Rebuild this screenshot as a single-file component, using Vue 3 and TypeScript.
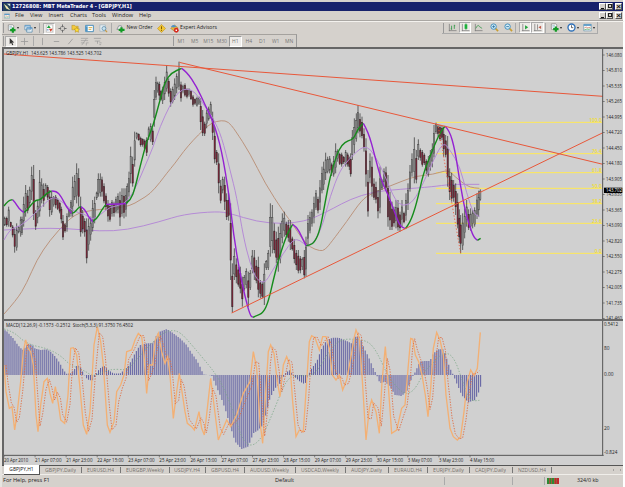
<script setup lang="ts">
interface Tool {
  icon: string
  w: number
  active?: boolean
  menu?: boolean
  text?: string
}
interface Candle {
  x: number
  high: number
  low: number
  top: number
  bottom: number
  bear: boolean
}
type Point = [number, number]

const menus = [
  { label: 'File', w: 15 },
  { label: 'View', w: 18.5 },
  { label: 'Insert', w: 21.5 },
  { label: 'Charts', w: 22 },
  { label: 'Tools', w: 20 },
  { label: 'Window', w: 27 },
  { label: 'Help', w: 14 },
]

const mainTools: Tool[] = [
  { icon: 'new', w: 16, menu: true },
  { icon: 'profiles', w: 17, menu: true },
  { icon: 'sep', w: 4 },
  { icon: 'market', w: 12, active: true },
  { icon: 'cross', w: 14 },
  { icon: 'folder', w: 13 },
  { icon: 'terminal', w: 14 },
  { icon: 'tester', w: 14 },
  { icon: 'sep', w: 3 },
  { icon: 'order', w: 41, text: 'New Order' },
  { icon: 'alert', w: 13 },
  { icon: 'expert', w: 51, text: 'Expert Advisors' },
]
const chartTools: Tool[] = [
  { icon: 'bars', w: 14 },
  { icon: 'candles', w: 12, active: true },
  { icon: 'line', w: 15 },
  { icon: 'zoomin', w: 16 },
  { icon: 'zoomout', w: 12 },
  { icon: 'sep', w: 4 },
  { icon: 'scroll', w: 12, active: true },
  { icon: 'shift', w: 13, active: true },
  { icon: 'sep', w: 3 },
  { icon: 'new', w: 16, menu: true },
  { icon: 'clock', w: 17, menu: true },
  { icon: 'template', w: 16, menu: true },
]
const drawTools: Tool[] = [
  { icon: 'cursor', w: 12, active: true },
  { icon: 'plus', w: 15 },
  { icon: 'sep', w: 2 },
  { icon: 'vline', w: 14 },
  { icon: 'hline', w: 14 },
  { icon: 'trend', w: 14 },
  { icon: 'fibo', w: 14 },
  { icon: 'label', w: 13 },
]
const periods = ['M1', 'M5', 'M15', 'M30', 'H1', 'H4', 'D1', 'W1', 'MN']

const tabs = [
  { label: 'GBPJPY,Daily', w: 41.5, t: 31 },
  { label: 'EURUSD,H4', w: 39, t: 27 },
  { label: 'EURGBP,Weekly', w: 49, t: 38 },
  { label: 'USDJPY,H4', w: 36, t: 26 },
  { label: 'GBPUSD,H4', w: 39, t: 28 },
  { label: 'AUDUSD,Weekly', w: 51, t: 39 },
  { label: 'USDCAD,Weekly', w: 50, t: 38 },
  { label: 'AUDJPY,Daily', w: 43, t: 31 },
  { label: 'EURAUD,H4', w: 39, t: 28 },
  { label: 'EURJPY,Daily', w: 42, t: 31 },
  { label: 'CADJPY,Daily', w: 43, t: 31 },
  { label: 'NZDUSD,H4', w: 39, t: 28 },
]

// chart space: three units per screen pixel, y grows downwards
const priceLabels = [
  '146.080', '145.810', '145.535', '145.265', '144.995', '144.720', '144.450', '144.180', '143.905',
  '143.635', '143.365', '143.090', '142.820', '142.550', '142.275', '142.005', '141.735', '141.460',
].map((text, i) => ({ text, y: 15 + i * 46.5 }))

const fibo = [
  { text: '100.0', y: 217 },
  { text: '76.4', y: 311 },
  { text: '61.8', y: 368 },
  { text: '50.0', y: 415 },
  { text: '38.2', y: 461 },
  { text: '23.6', y: 520 },
  { text: '0.0', y: 610 },
]

const timeLabels = [
  '20 Apr 2010', '21 Apr 07:00', '21 Apr 23:00', '22 Apr 15:00', '23 Apr 07:00', '25 Apr 23:00', '26 Apr 15:00', '27 Apr 07:00',
  '27 Apr 23:00', '28 Apr 15:00', '29 Apr 07:00', '29 Apr 23:00', '30 Apr 15:00', '3 May 07:00', '3 May 23:00', '4 May 15:00',
].map((text, i) => ({ text, x: 11 + i * 93.2 }))

// x, high, low
const ranges = `14 500 528,20 500 530,26 470 530,32 515 532,38 525 562,44 535 608,50 520 602,56 528 550,62 500 560,66 500 555,71 440 530,77 405 500,83 420 490,89 410 470,95 350 450,101 345 510,
107 480 540,113 450 520,119 360 500,125 385 460,131 400 470,137 400 440,143 405 450,149 420 500,155 425 495,161 438 470,167 435 475,173 445 480,179 455 490,184 470 520,189 495 570,195 520 548,
201 490 545,207 475 502,213 450 500,218 380 500,224 375 450,230 340 460,236 355 470,242 440 560,248 480 550,254 505 560,260 505 640,266 505 602,272 500 572,278 450 545,284 440 520,290 425 450,
295 370 440,301 370 440,306 380 440,312 400 460,318 430 480,324 450 515,330 460 515,336 450 500,342 455 500,348 440 490,354 430 490,360 425 528,366 415 500,372 415 505,378 415 500,382 400 460,
387 365 440,392 290 400,398 320 410,404 245 350,410 247 268,416 250 272,422 260 290,428 265 290,434 268 300,440 262 318,446 230 270,452 220 275,458 235 285,463 120 230,468 80 150,473 95 128,
478 95 150,483 120 152,488 110 162,494 80 150,500 45 125,506 85 140,512 115 170,518 110 160,524 85 150,530 70 130,537 35 120,543 95 155,549 104 130,555 100 140,561 115 145,567 115 140,573 120 150,
579 135 170,585 145 165,591 140 170,597 140 165,602 145 240,608 180 258,614 215 258,620 180 235,626 170 212,632 155 205,638 185 270,644 230 340,650 300 345,656 310 430,662 390 460,668 380 430,
674 380 480,680 430 510,686 430 512,692 460 690,697 640 788,703 595 690,709 625 700,715 650 710,721 650 730,727 680 770,733 675 722,739 655 715,745 665 770,751 660 720,757 600 670,763 600 690,769 630 700,
775 620 742,781 690 745,787 695 745,793 640 765,799 630 660,805 600 660,811 460 620,817 465 610,823 520 610,829 545 640,835 530 665,841 520 640,847 490 580,853 485 560,859 515 560,865 510 575,
871 510 600,877 560 602,883 568 640,889 600 660,895 600 670,901 618 670,907 622 660,913 600 685,918 560 680,924 495 590,930 485 550,936 478 530,942 440 520,948 420 480,954 440 490,960 390 480,
966 350 430,971 335 420,977 308 390,983 320 370,989 318 370,995 338 378,1001 318 380,1007 280 370,1013 298 335,1019 308 345,1025 308 350,1031 318 342,1037 300 350,1043 308 350,1048 320 360,1052 310 380,
1057 240 330,1063 205 310,1069 190 275,1074 165 250,1080 190 262,1086 200 265,1092 235 305,1098 265 410,1104 360 500,1110 310 400,1116 320 440,1122 385 450,1128 395 460,1134 420 505,1140 350 490,1146 388 420,
1152 355 410,1158 350 420,1164 375 530,1170 425 540,1176 455 540,1182 470 530,1188 450 535,1194 450 542,1200 485 545,1206 450 530,1212 485 520,1218 430 512,1224 400 480,1230 345 425,1236 310 380,1243 262 400,
1249 300 400,1255 268 330,1261 295 332,1267 300 350,1273 310 345,1279 328 372,1285 318 380,1291 300 362,1297 280 352,1302 225 322,1308 218 252,1314 225 260,1320 225 272,1326 228 270,1331 230 320,1337 255 322,
1343 258 410,1349 355 450,1355 368 455,1361 390 455,1367 400 495,1373 430 535,1378 478 580,1382 495 610,1388 490 600,1394 475 565,1400 450 530,1406 478 540,1412 475 542,1418 480 535,1424 472 530,1431 430 507,1436 422 500,1441 418 452`

const candles: Candle[] = ranges.split(',').map((row, i, rows) => {
  const [x, high, low] = row.trim().split(' ').map(Number)
  const prev = (rows[i - 1] ?? row).trim().split(' ').map(Number)
  const bear = high + low > prev[1] + prev[2]
  const span = low - high
  const lead = span > 60 ? 0.26 : 0.16
  return { x, high, low, top: high + span * lead, bottom: low - span * (0.12 + (i % 3) * 0.07), bear }
})

const points = (text: string): Point[] =>
  text.trim().split(/\s+/).map(p => p.split(',').map(Number) as Point)

// quadratic smoothing through segment midpoints
const smooth = (text: string): string => {
  const pts = points(text)
  let d = `M${pts[0]}`
  for (let i = 1; i < pts.length - 1; i++) {
    const [x, y] = pts[i]
    const [nx, ny] = pts[i + 1]
    d += ` Q${x},${y} ${(x + nx) / 2},${(y + ny) / 2}`
  }
  return `${d} L${pts[pts.length - 1]}`
}

const fastUp = [
  '12,468 25,452 38,449', '72,487 80,482 95,462 108,450 120,450 140,430 155,423', '215,490 222,490 235,473 243,470',
  '278,515 290,508 305,480 318,463', '378,461 392,450 405,415 420,350 440,275 460,225 480,150 495,95 515,68 545,55',
  '758,802 768,798 790,788 805,755 820,690 835,630 860,555 878,523',
  '918,587 930,586 945,575 960,540 975,460 990,380 1010,315 1025,285 1045,271 1060,268 1075,235 1090,220',
  '1216,536 1230,520 1250,460 1270,370 1290,320 1310,270 1325,240 1335,229', '1432,571 1442,565',
].map(smooth)
const fastDown = [
  '38,449 45,456 58,478 72,487', '155,423 170,423 185,442 200,472 215,490', '243,470 255,478 265,500 278,515',
  '318,463 335,463 378,461',
  '545,55 560,65 590,110 615,165 640,215 665,300 688,440 700,550 720,670 735,740 750,795 758,802',
  '878,523 890,530 905,560 918,587',
  '1090,220 1105,245 1125,320 1145,395 1165,435 1185,490 1200,528 1216,536',
  '1335,229 1348,240 1365,300 1380,400 1395,480 1408,525 1420,560 1432,571',
].map(smooth)

const midMa = smooth(`12,570 30,535 60,530 100,495 140,455 160,440 180,450 220,485 250,490 280,510 300,495 330,470 370,465 400,430 430,360 460,290 480,230
510,165 535,125 560,115 585,125 615,170 640,205 665,260 690,360 710,440 730,560 750,640 770,690 795,700 815,665 850,610 880,568 900,570 920,590
945,575 970,520 990,440 1020,360 1050,325 1070,305 1090,290 1110,295 1135,335 1160,390 1185,450 1210,470 1240,455 1270,400 1300,330 1330,275 1350,300 1380,350 1400,430 1420,490 1438,500`)
const tanMa = smooth(`12,792 50,750 80,700 110,630 150,570 200,515 225,495 250,485 300,478 340,475 390,468 420,450 450,432 480,397
500,370 525,340 550,305 580,270 610,240 635,218 665,211 685,215 705,240 750,310 795,400 850,485 880,525 905,565 930,592 960,603 975,600
995,575 1040,515 1085,450 1115,430 1160,412 1210,392 1250,378 1300,373 1335,362 1350,365 1365,380 1390,400 1410,412 1438,415`)
const slowMa = smooth(`12,540 100,535 200,535 300,544 380,540 480,515 550,493 650,484 690,490 770,515 850,522 915,513 950,500 1000,475 1050,448 1120,425 1200,418 1300,410 1350,403 1438,403`)

const histAnchors = points(`14,45 20,48 30,60 40,70 50,85 60,98 70,105 80,90 95,88 105,100 120,105 140,103 150,108 160,118 170,130 180,145 190,165 200,176 212,175 222,165 232,150 240,155 248,170 258,188
268,196 278,196 284,185 292,170 300,160 312,152 325,165 340,175 360,176 372,165 384,155 392,140 405,115 420,90 440,85 460,85 470,60 480,50 500,42 520,55 540,70 560,90 575,115 590,135 600,155 610,178
635,181 645,205 660,240 675,280 690,330 705,380 725,402 745,395 760,355 775,345 790,330 800,290 810,250 825,220 845,200 855,175 870,165 880,182 900,200 915,208 925,180 935,160 950,140 965,100 980,75
1000,68 1015,68 1040,78 1055,85 1065,65 1080,65 1090,95 1105,125 1120,160 1130,180 1140,205 1155,200 1170,215 1185,240 1205,243 1220,230 1235,190 1245,172 1260,140 1275,138 1290,138 1300,115 1315,103
1330,103 1340,130 1350,160 1360,180 1370,205 1385,240 1405,262 1425,255 1435,235 1442,215`)

const bars: Point[] = []
for (let x = 15; x <= 1442; x += 5.97) {
  const i = histAnchors.findIndex(p => p[0] >= x)
  const [x1, y1] = histAnchors[i]
  const [x0, y0] = histAnchors[Math.max(i - 1, 0)]
  bars.push([x, x1 === x0 ? y1 : y0 + ((y1 - y0) * (x - x0)) / (x1 - x0)])
}

const stochPts = points(`12,150 18,230 28,280 36,275 44,345 52,290 62,200 70,110 77,75 84,100 92,110 100,150 108,300 114,350 122,270 132,200 142,190 150,235 158,265 166,215 175,265 182,315 194,325 204,240 212,100
220,98 230,120 240,220 250,330 260,358 270,290 282,90 292,35 302,80 310,150 322,330 330,352 342,320 350,230 362,210 372,180 380,110 395,105 405,75 415,55 425,65 432,120 440,235 448,150 458,150 466,75
475,55 485,110 495,145 503,125 510,180 520,310 530,230 538,175 546,230 555,290 562,325 575,335 583,345 597,290 605,340 613,360 622,280 632,190 642,270 655,375 665,350 680,315 692,335 710,300 730,235
750,200 760,110 770,160 780,320 788,385 798,220 805,110 812,90 822,115 832,200 840,245 850,150 860,125 870,150 878,260 888,365 898,345 910,350 920,200 928,80 935,62 945,68 958,105 968,65 978,65 988,100
997,180 1008,195 1018,180 1028,225 1040,195 1052,130 1062,70 1068,45 1078,70 1086,180 1098,375 1108,280 1115,255 1128,290 1138,355 1146,200 1156,95 1164,200 1175,355 1190,345 1205,280 1215,270 1225,150
1232,70 1238,72 1246,120 1256,140 1266,180 1276,240 1284,305 1292,220 1300,100 1310,52 1320,75 1330,120 1338,240 1350,340 1360,365 1372,375 1382,365 1392,290 1402,200 1412,165 1422,182 1432,160 1441,52`)
const stoch = stochPts.join(' ')
const stochSignal = stochPts
  .map(([x, y], i) => [x + 6, (y * 2 + stochPts[Math.max(i - 1, 0)][1]) / 3])
  .filter(([x]) => x < 1440)
  .join(' ')
const macdSignal = smooth(`12,42 40,50 70,78 100,92 140,100 180,120 210,150 250,165 280,185 310,170 340,162 380,165 400,145 440,100 480,60 510,45 540,50 580,95 630,155 645,175 670,215 700,290 720,355 740,390
765,390 790,360 820,290 850,215 870,185 900,182 930,182 950,170 975,130 1000,90 1030,72 1070,73 1100,78 1120,95 1140,130 1160,175 1180,205 1210,235 1230,235 1250,215 1275,165 1300,145 1320,120 1345,113
1365,135 1385,190 1405,250 1420,258 1438,256`)
</script>

<template>
  <div class="terminal">
    <svg class="sprite">
      <symbol id="new" viewBox="0 0 10 10">
        <path d="M1.5 1h5l1 1v5h-6z" fill="#fff" stroke="#777" stroke-width=".7" />
        <path d="M2.5 3h3M2.5 4.5h3" stroke="#59a" stroke-width=".6" />
        <path d="M6.5 3.8v6M3.5 6.8h6" stroke="#129a25" stroke-width="2.4" />
      </symbol>
      <symbol id="profiles" viewBox="0 0 10 10">
        <path d="M1 1.5h6v5h-6zM3 4h6v5h-6z" fill="#f6fafc" stroke="#4e86ad" stroke-width=".8" />
        <path d="M3 4.8h6M1 2.2h6" stroke="#5b9bd0" stroke-width="1.2" />
      </symbol>
      <symbol id="market" viewBox="0 0 10 10">
        <path d="M1.500 1h7v8h-7z" fill="#fff" stroke="#9a9a9a" stroke-width=".5" />
        <path d="M2 4.500l2.200-3 2.200 3z" fill="#1ba03a" />
        <path d="M4.200 5.200h4.400l-2.200 3.300z" fill="#d4452e" />
        <path d="M2 6.500h2" stroke="#3a73b8" />
      </symbol>
      <symbol id="cross" viewBox="0 0 10 10">
        <circle cx="5" cy="5" r="2.500" fill="none" stroke="#777" stroke-width=".8" />
        <path d="M5 .5v3M5 6.500v3M.5 5h3M6.500 5h3" stroke="#666" />
      </symbol>
      <symbol id="folder" viewBox="0 0 10 10">
        <path d="M1 1.500h3l1 1h3v4h-7z" fill="#f3c93c" stroke="#a88622" stroke-width=".5" />
        <path d="M6.500 3.500l1 2 2 .2-1.500 1.500.4 2-1.900-1-1.900 1 .4-2-1.500-1.500 2-.2z" fill="#ffdf35" stroke="#a77f15" stroke-width=".5" />
      </symbol>
      <symbol id="terminal" viewBox="0 0 10 10">
        <path d="M.7 1.500h8.600v7h-8.600z" fill="#fff" stroke="#3e87b5" />
        <path d="M1 2.500h2v5.500h-2z" fill="#4b97ca" />
        <path d="M4 4h4M4 6h3" stroke="#d5aa40" />
      </symbol>
      <symbol id="tester" viewBox="0 0 10 10">
        <path d="M1 1h6v7h-6z" fill="#e5edf2" stroke="#8ba3b5" stroke-width=".6" />
        <circle cx="5.500" cy="5" r="2.200" fill="#c8e2ef" stroke="#5485a5" stroke-width=".8" />
        <path d="M7 6.800l2 2.200" stroke="#c6983f" stroke-width="1.300" />
      </symbol>
      <symbol id="order" viewBox="0 0 10 10">
        <path d="M1 6l2-4h3l1 4z" fill="#eee" stroke="#68727c" stroke-width=".7" />
        <path d="M6 3.500v6M3 6.500h6.500" stroke="#129a25" stroke-width="2.400" />
      </symbol>
      <symbol id="alert" viewBox="0 0 10 10">
        <path d="M5 .5l4.500 4.500-4.500 4.500-4.500-4.500z" fill="#f3c735" stroke="#b88b18" stroke-width=".6" />
        <path d="M5 2.500v3.200M5 6.500v1.200" stroke="#765400" />
      </symbol>
      <symbol id="expert" viewBox="0 0 10 10">
        <path d="M.7 5l4-4 4 3-3.500 4z" fill="#e6b440" stroke="#8f7227" stroke-width=".5" />
        <path d="M1 3c2-3 5-2 6 0l-3 1z" fill="#4f92c5" />
        <circle cx="7" cy="7" r="2.700" fill="#d62b20" />
        <path d="M6.200 6.200h1.600v1.600h-1.600z" fill="#fff" />
      </symbol>
      <symbol id="bars" viewBox="0 0 10 10">
        <path d="M1.500 1v8M1 8.500h8.500" stroke="#777" stroke-width=".8" />
        <path d="M4 3v4.500M3 6.500h1M7 2v4.500M7 3h1" stroke="#2b9440" stroke-width=".9" />
      </symbol>
      <symbol id="candles" viewBox="0 0 10 10">
        <path d="M1.500 1v8M1 8.500h8.500" stroke="#777" stroke-width=".8" />
        <path d="M5.500.5v7" stroke="#16852b" stroke-width=".8" />
        <path d="M4 1.500h3v5h-3z" fill="#1bb13b" />
      </symbol>
      <symbol id="line" viewBox="0 0 10 10">
        <path d="M1.500 1v8M1 8.500h8.500" stroke="#777" stroke-width=".8" />
        <path d="M2 6c2-4 3-4 4-2l3 2" fill="none" stroke="#2b9440" stroke-width=".8" />
      </symbol>
      <symbol id="zoomin" viewBox="0 0 10 10">
        <path d="M6 6l3 3" stroke="#c99d32" stroke-width="1.800" />
        <circle cx="4" cy="4" r="3" fill="#d2ecf6" stroke="#3a8abb" />
        <path d="M4 2.500v3M2.500 4h3" stroke="#2671a2" stroke-width=".9" />
      </symbol>
      <symbol id="zoomout" viewBox="0 0 10 10">
        <path d="M6 6l3 3" stroke="#c99d32" stroke-width="1.800" />
        <circle cx="4" cy="4" r="3" fill="#d2ecf6" stroke="#3a8abb" />
        <path d="M2.500 4h3" stroke="#2671a2" stroke-width=".9" />
      </symbol>
      <symbol id="scroll" viewBox="0 0 10 10">
        <path d="M2 1v8M1 8.500h8.500" stroke="#777" stroke-width=".8" />
        <path d="M4.500 2.500l3.500 2.300-3.500 2.300z" fill="#24a23d" />
      </symbol>
      <symbol id="shift" viewBox="0 0 10 10">
        <path d="M2 1v8M1 8.500h8.500M5 1.500v6" stroke="#777" stroke-width=".8" />
        <path d="M9 3l-3 1.800 3 1.800z" fill="#c25a48" />
      </symbol>
      <symbol id="clock" viewBox="0 0 10 10">
        <circle cx="5" cy="5" r="3.900" fill="#fff" stroke="#2e70b8" stroke-width="1.500" />
        <path d="M5 2.500v2.700h2" fill="none" stroke="#333" stroke-width=".8" />
      </symbol>
      <symbol id="template" viewBox="0 0 10 10">
        <path d="M.8 1.500h8.400v7.200h-8.400z" fill="#fff" stroke="#5f8fae" stroke-width=".7" />
        <path d="M.8 2.300h8.400" stroke="#4c92c4" stroke-width="1.700" />
        <path d="M1.500 5.500l2-1 2 1 3-1" fill="none" stroke="#bd5b42" stroke-width=".7" />
        <path d="M1.500 7.500l3-.8 2 .5 2-1" fill="none" stroke="#28963d" stroke-width=".7" />
      </symbol>
      <symbol id="cursor" viewBox="0 0 10 10">
        <path d="M3 1v7l1.600-1.500 1.200 2.800 1.200-.6-1.200-2.600h2.200z" fill="#333" />
      </symbol>
      <symbol id="plus" viewBox="0 0 10 10"><path d="M5 1v8M1 5h8" stroke="#999" stroke-width=".9" /></symbol>
      <symbol id="vline" viewBox="0 0 10 10"><path d="M5 1v8" stroke="#999" stroke-width=".9" /></symbol>
      <symbol id="hline" viewBox="0 0 10 10"><path d="M2 5h6" stroke="#999" stroke-width=".9" /></symbol>
      <symbol id="trend" viewBox="0 0 10 10"><path d="M2.500 8l5-6" stroke="#999" stroke-width=".9" /></symbol>
      <symbol id="fibo" viewBox="0 0 10 10">
        <path d="M1 1.500h8M1 4h8M1 6.500h4M2 9l5-7M7 6.500h2.500M7 6.500v3" fill="none" stroke="#999" stroke-width=".7" />
      </symbol>
      <symbol id="label" viewBox="0 0 10 10">
        <path d="M1 1.500h8M2 4.500h6M5 4.500v3M7 6.500h2.500M7 8.500h2" fill="none" stroke="#999" stroke-width=".8" />
      </symbol>
    </svg>

    <header class="title">
      <svg class="title__logo" viewBox="0 0 10 10">
        <path d="M0 0h10v10h-10z" fill="#25435c" />
        <path d="M1 1l4 3 4 5-5-2z" fill="#f5e8b0" />
        <path d="M5 1h4v3z" fill="#d9e5ec" />
      </svg>
      <span class="title__text">12726808: MBT MetaTrader 4 - [GBPJPY,H1]</span>
      <span class="winbtns"><i class="min" /><i class="restore" /><i class="close">×</i></span>
    </header>

    <nav class="menu">
      <svg class="menu__icon"><use href="#template" /></svg>
      <span v-for="m in menus" :key="m.label" class="menu__item" :style="{ width: m.w + 'px' }">{{ m.label }}</span>
      <span class="winbtns"><i class="min" /><i class="restore" /><i class="close">×</i></span>
    </nav>

    <div class="toolbar">
      <i class="grip" />
      <span
        v-for="(t, i) in mainTools"
        :key="i"
        class="tool"
        :class="{ 'tool--active': t.active, 'tool--sep': t.icon === 'sep' }"
        :style="{ width: t.w + 'px' }"
      >
        <svg v-if="t.icon !== 'sep'"><use :href="'#' + t.icon" /></svg>
        <span v-if="t.text" class="tool__text">{{ t.text }}</span>
        <i v-if="t.menu" class="arrow" />
      </span>
      <div class="toolbar__right">
        <i class="grip" />
        <span
          v-for="(t, i) in chartTools"
          :key="i"
          class="tool"
          :class="{ 'tool--active': t.active, 'tool--sep': t.icon === 'sep' }"
          :style="{ width: t.w + 'px' }"
        >
          <svg v-if="t.icon !== 'sep'"><use :href="'#' + t.icon" /></svg>
          <i v-if="t.menu" class="arrow" />
        </span>
      </div>
    </div>

    <div class="toolbar toolbar--draw">
      <i class="grip" />
      <span
        v-for="(t, i) in drawTools"
        :key="i"
        class="tool"
        :class="{ 'tool--active': t.active, 'tool--sep': t.icon === 'sep' }"
        :style="{ width: t.w + 'px' }"
      >
        <svg v-if="t.icon !== 'sep'"><use :href="'#' + t.icon" /></svg>
      </span>
      <div class="periods">
        <i class="grip" />
        <span v-for="p in periods" :key="p" class="period" :class="{ 'period--active': p === 'H1' }">{{ p }}</span>
      </div>
    </div>

    <main class="charts">
      <svg class="price" viewBox="12 -3 1857 810">
        <g class="fibo">
          <g v-for="f in fibo" :key="f.text">
            <path :d="`M1308 ${f.y}H1806`" />
            <text x="1805" :y="f.y - 2" text-anchor="end">{{ f.text }}</text>
          </g>
        </g>
        <path class="ma ma--tan" :d="tanMa" />
        <path class="ma ma--slow" :d="slowMa" />
        <g v-for="c in candles" :key="c.x">
          <path class="wick" :d="`M${c.x} ${c.high}V${c.low}`" />
          <rect :class="c.bear ? 'bear' : 'bull'" :x="c.x - 1.8" :y="c.top" width="3.6" :height="c.bottom - c.top" />
        </g>
        <path class="ma ma--slow" :d="midMa" />
        <path v-for="d in fastUp" :key="d" class="fast fast--up" :d="d" />
        <path v-for="d in fastDown" :key="d" class="fast fast--down" :d="d" />
        <path class="trend" d="M12 12L1809 139M538 37L1809 343M695 789L1809 248" />
        <path class="trend trend--dots" d="M1315 230L1382 610" />
        <text class="info" x="18" y="14" textLength="287" lengthAdjust="spacingAndGlyphs">GBPJPY,H1&#160; 143.625 143.786 143.525 143.702</text>
        <path class="axis" d="M1808 -3V807" />
        <g v-for="p in priceLabels" :key="p.text">
          <path class="tick" :d="`M1808 ${p.y}h6`" />
          <text class="axis-text" x="1818" :y="p.y + 5" textLength="48" lengthAdjust="spacingAndGlyphs">{{ p.text }}</text>
        </g>
        <rect x="1812" y="413" width="55" height="16" />
        <text class="axis-text axis-text--now" x="1818" y="426" textLength="48" lengthAdjust="spacingAndGlyphs">143.702</text>
      </svg>

      <svg class="indicator" viewBox="12 18 1857 432">
        <path v-for="b in bars" :key="b[0]" class="hist" :d="`M${b[0]} 180V${b[1]}`" />
        <path class="macd" :d="macdSignal" />
        <polyline class="stoch" :points="stoch" />
        <polyline class="stoch-signal" :points="stochSignal" />
        <text class="info" x="18" y="37" textLength="381" lengthAdjust="spacingAndGlyphs">MACD(12,26,9) -0.1573 -0.2512&#160; Stoch(5,3,3) 91.3750 76.4502</text>
        <path class="axis" d="M1808 18V421M12 421H1811" />
        <text class="axis-text" x="1812" y="33" textLength="42" lengthAdjust="spacingAndGlyphs">0.5412</text>
        <text class="axis-text" x="1812" y="104">80</text>
        <text class="axis-text" x="1812" y="183">0.00</text>
        <text class="axis-text" x="1812" y="344">20</text>
        <text class="axis-text" x="1812" y="417" textLength="40" lengthAdjust="spacingAndGlyphs">-0.824</text>
        <g v-for="t in timeLabels" :key="t.text">
          <path class="tick" :d="`M${t.x + 1} 421v6`" />
          <text class="axis-text" :x="t.x + 1" y="440" :textLength="t.text.length * 6.6" lengthAdjust="spacingAndGlyphs">{{ t.text }}</text>
        </g>
      </svg>
    </main>

    <div class="tabs">
      <span class="tab tab--active">GBPJPY,H1</span>
      <span v-for="t in tabs" :key="t.label" class="tab" :style="{ width: t.w + 'px' }">
        <svg class="tab__label" :style="{ width: t.t + 'px' }"><text x="0" y="6" :textLength="t.t" lengthAdjust="spacingAndGlyphs">{{ t.label }}</text></svg>
      </span>
      <span class="tabs__nav"><i class="nav-left" /><i class="nav-right" /></span>
    </div>

    <footer class="status">
      <span class="status__help">For Help, press F1</span>
      <span class="status__profile">Default</span>
      <span class="status__cell" />
      <span class="status__cell status__cell--wide" />
      <span class="status__cell status__cell--net">
        <i class="signal"><b /><b /><b /><b /><b /></i>
        <span>324/0 kb</span>
      </span>
    </footer>
  </div>
</template>

<style>
body {
  margin: 0;
  background: #fff;
}
</style>

<style scoped>
.terminal {
  box-sizing: border-box;
  width: 625px;
  height: 487px;
  padding: 2px 2px 0 2px;
  display: flex;
  flex-direction: column;
  overflow: hidden;
  background: linear-gradient(90deg, #e6e4e0 2px, #d5d1cc 2px 623px, #fff 623px);
  font-family: "Open Sans", "Noto Sans", sans-serif;
  font-size: 5.6px;
  line-height: 1;
  color: #222;
}

.sprite {
  position: absolute;
  width: 0;
  height: 0;
}

.title {
  height: 9px;
  flex: none;
  display: flex;
  align-items: center;
  background: #17216b;
  color: #fff;
}

.title__logo {
  width: 8px;
  height: 8px;
  margin: 0 1px 0 1px;
}

.title__text {
  font-family: "DejaVu Sans Condensed", "DejaVu Sans", sans-serif;
  font-weight: bold;
  font-size: 5.45px;
  white-space: nowrap;
}

.winbtns {
  display: flex;
  margin-left: auto;
  margin-right: 1px;
}

.winbtns i {
  box-sizing: border-box;
  width: 7px;
  height: 7px;
  background: #d6d2cb;
  border: 1px solid #fff;
  border-right-color: #555;
  border-bottom-color: #555;
  color: #111;
  font: bold 8px/5px "Liberation Sans", sans-serif;
  text-align: center;
}

.winbtns .close {
  margin-left: 2px;
}

.min::before {
  content: "";
  display: block;
  width: 3px;
  height: 1px;
  margin: 4px 0 0 1px;
  background: #111;
}

.restore::before {
  content: "";
  display: block;
  width: 2px;
  height: 2px;
  margin: 0 0 0 1px;
  border: 1px solid #222;
}

.menu {
  height: 9px;
  flex: none;
  display: flex;
  align-items: center;
  border-bottom: 1px solid #aaa7a3;
}

.menu__icon {
  width: 6px;
  height: 6px;
  margin: 0 5px 0 2px;
}

.menu__item {
  white-space: nowrap;
}

.toolbar {
  box-sizing: border-box;
  height: 13px;
  flex: none;
  display: flex;
  align-items: center;
  width: 622px;
  border-top: 1px solid #f4f2ee;
}

.toolbar--draw {
  width: 295px;
  border-top: 1px solid #a5a29e;
  border-right: 1px solid #999;
}

.grip {
  height: 10px;
  margin: 0 1px;
  border-right: 1px solid #999;
  flex: none;
}

.tool {
  box-sizing: border-box;
  flex: none;
  height: 11px;
  display: flex;
  align-items: center;
  justify-content: center;
  gap: 1px;
}

.tool svg {
  width: 9px;
  height: 9px;
  flex: none;
}

.tool--active {
  background: #eceae7;
  border: 1px solid #aaa;
  border-right-color: #fff;
  border-bottom-color: #fff;
}

.tool--sep {
  border-left: 1px solid #aaa;
  height: 10px;
  margin-left: 1px;
}

.tool__text {
  white-space: nowrap;
  font-size: 5.1px;
}

.arrow {
  border: 1.5px solid transparent;
  border-top: 2px solid #222;
  border-bottom: 0;
}

.toolbar__right {
  display: flex;
  align-items: center;
  height: 12px;
  box-sizing: border-box;
  margin-left: auto;
  margin-right: 26px;
  border-right: 1px solid #aaa;
  border-bottom: 1px solid #aaa;
}

.periods {
  display: flex;
  align-items: center;
  margin-left: auto;
}

.period {
  box-sizing: border-box;
  width: 13.5px;
  height: 11px;
  font-size: 5px;
  line-height: 11px;
  text-align: center;
  color: #777;
}

.period--active {
  background: #eeecea;
  border: 1px solid #999;
  border-right-color: #fff;
  border-bottom-color: #fff;
  line-height: 9px;
}

.charts {
  box-sizing: border-box;
  height: 418px;
  flex: none;
  width: 621px;
  border-top: 2px solid #666;
  border-left: 2px solid #666;
  background: #d0d0d0;
  display: flex;
  flex-direction: column;
}

.price {
  width: 619px;
  height: 270px;
  flex: none;
  overflow: visible;
}

.indicator {
  width: 619px;
  height: 144px;
  flex: none;
  border-top: 2px solid #686868;
}

.charts text {
  font-family: "Open Sans", "Noto Sans", sans-serif;
  font-size: 14.5px;
  fill: #222;
}

.charts .fibo text {
  fill: #f2df2e;
  font-weight: 600;
}

.charts .axis-text--now {
  fill: #fff;
}

.fibo path {
  stroke: #ffe957;
  stroke-width: 3;
}

.axis {
  fill: none;
  stroke: #555;
  stroke-width: 3;
}

.tick {
  stroke: #555;
  stroke-width: 2;
}

.wick {
  stroke: #3f3f3f;
  stroke-width: 2.4;
}

.bull {
  fill: #999;
  stroke: #444;
  stroke-width: 1.4;
}

.bear {
  fill: #8c2138;
  stroke: #33282a;
  stroke-width: 1.6;
}

.ma {
  fill: none;
  stroke-width: 2.8;
}

.ma--tan {
  stroke: #b98f76;
}

.ma--slow {
  stroke: #b385d6;
}

.fast {
  fill: none;
  stroke-width: 4.2;
}

.fast--up {
  stroke: #168c1c;
}

.fast--down {
  stroke: #9421d2;
}

.trend {
  fill: none;
  stroke: #e8583a;
  stroke-width: 3;
}

.trend--dots {
  stroke-width: 2.5;
  stroke-dasharray: 4 6;
}

.hist {
  stroke: #6362a3;
  stroke-width: 3.2;
}

.macd {
  fill: none;
  stroke: #79a684;
  stroke-width: 2.5;
  stroke-dasharray: 4 5;
}

.stoch {
  fill: none;
  stroke: #f3b074;
  stroke-width: 4;
}

.stoch-signal {
  fill: none;
  stroke: #df6c42;
  stroke-width: 2.7;
  stroke-dasharray: 4 4;
}

.tabs {
  height: 10px;
  flex: none;
  display: flex;
  align-items: center;
  width: 621px;
  box-sizing: border-box;
  border-top: 1px solid #555;
  border-bottom: 1px solid #f0eeea;
}

.tab {
  box-sizing: border-box;
  height: 6px;
  border-right: 1px solid #777;
  display: flex;
  align-items: center;
  justify-content: center;
  flex: none;
}

.tab--active {
  width: 36px;
  height: 10px;
  margin-left: 2px;
  background: #fff;
  border-right: 1px solid #555;
  border-bottom: 1px solid #555;
  font-size: 4.9px;
  color: #111;
}

.tab__label {
  height: 8px;
  flex: none;
  font-size: 5.2px;
  fill: #77736e;
}

.tabs__nav {
  margin-left: auto;
  margin-right: 1px;
  display: flex;
  gap: 6px;
}

.nav-left {
  border: 1.5px solid transparent;
  border-right-color: #777;
}

.nav-right {
  border: 1.5px solid transparent;
  border-left-color: #777;
}

.status {
  flex: 1;
  display: flex;
  align-items: center;
  width: 621px;
}

.status__help {
  width: 271px;
  box-sizing: border-box;
  padding-left: 1px;
}

.status__profile {
  box-sizing: border-box;
  width: 171px;
  padding-left: 2px;
}

.status__cell {
  box-sizing: border-box;
  width: 68px;
  height: 8px;
  border-left: 1px solid #aaa;
}

.status__cell--wide {
  width: 32px;
}

.status__cell--net {
  width: 76px;
  display: flex;
  align-items: center;
  gap: 18px;
  padding-left: 2px;
  white-space: nowrap;
  font-size: 5.3px;
}

.signal {
  width: 12px;
  height: 6px;
  background: #9a5a3d;
  display: flex;
  gap: 1px;
}

.signal b {
  width: 1.5px;
  background: #2f8a33;
}

.signal b:nth-child(n + 4) {
  background: #c1272d;
}
</style>
